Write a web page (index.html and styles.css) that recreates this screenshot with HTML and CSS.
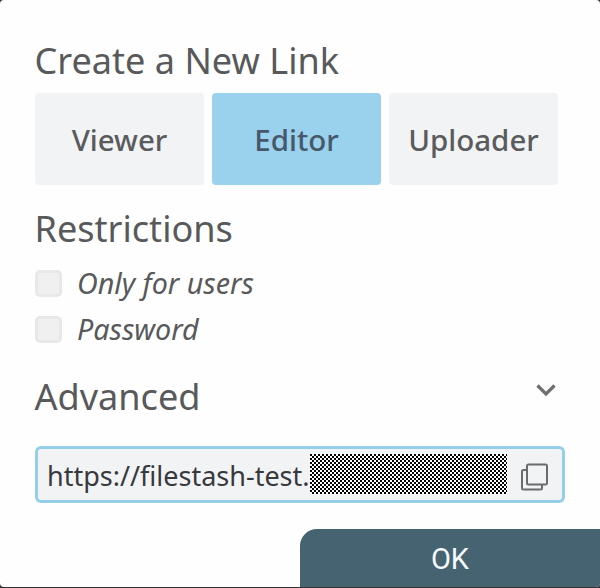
FILE: index.html
```html
<!DOCTYPE html>
<html lang="en">
<head>
<meta charset="utf-8">
<title>Create a New Link</title>
<link rel="stylesheet" href="styles.css">
</head>
<body>
<main class="modal">
  <div class="content">
    <h2 class="heading">Create a New Link</h2>
    <div class="roles">
      <button class="role">Viewer</button>
      <button class="role active">Editor</button>
      <button class="role">Uploader</button>
    </div>
    <h2 class="heading restrictions">Restrictions</h2>
    <label class="option"><span class="box"></span><span class="label">Only for users</span></label>
    <label class="option"><span class="box"></span><span class="label">Password</span></label>
    <div class="advanced">
      <h2 class="heading">Advanced</h2>
      <svg class="chevron" width="24" height="16" viewBox="0 0 24 16"><path d="M3.500 3.500 12 12l8.500-8.500" fill="none" stroke="#6f6f6f" stroke-width="3.200"/></svg>
    </div>
    <div class="link">
      <span class="url">https://filestash-test.</span>
      <span class="redacted"></span>
      <svg class="copy" width="28" height="28" viewBox="0 0 28 28" fill="none" stroke="#6b6b6d" stroke-width="2"><rect x="7" y="1.500" width="20" height="20" rx="1.500"/><path d="M7 7H3.500Q2 7 2 8.500V25q0 1.500 1.500 1.500H20.500q1.500 0 1.500-1.500V21.500"/></svg>
    </div>
  </div>
  <button class="ok">OK</button>
</main>
</body>
</html>
```
FILE: styles.css
```css
* { box-sizing: border-box; }
body { margin: 0; background: #333; font-family: "Noto Sans", sans-serif; color: #58595a; }
button { border: 0; padding: 0; font-family: inherit; color: inherit; }
.modal { width: 600px; height: 587px; background: #fefefe; border-radius: 4px; display: flex; flex-direction: column; justify-content: space-between; overflow: hidden; }
.content { padding: 35px 35px 0 35px; }
.heading { margin: 0 0 0 -0.500px; font-size: 36.100px; line-height: 50px; font-weight: 400; white-space: nowrap; }
.roles { display: flex; gap: 8px; margin-top: 8px; }
.role { width: 169px; height: 92px; border-radius: 4px; background: #f2f3f5; font-size: 29.500px; font-weight: 500; color: #5a5b5d; }
.role.active { background: #9ad1ec; color: #46586a; }
.restrictions { margin-top: 18px; margin-bottom: 7px; }
.option { display: flex; align-items: center; height: 46px; gap: 15px; }
.box { width: 27px; height: 27px; border: 3px solid #e8e8e8; border-radius: 5px; background: #f0f0f0; }
.label { font-size: 28.700px; font-style: italic; white-space: nowrap; margin-top: -2px; }
.advanced { display: flex; justify-content: space-between; margin-top: 19px; padding-right: 7px; }
.chevron { margin-top: 11px; }
.link { display: flex; align-items: center; width: 530px; height: 57px; margin-top: 25px; border: 3px solid #94cee8; border-radius: 6px; background: #f2f3f5; padding-left: 9px; color: #38393d; }
.url { width: 263px; font-size: 27px; white-space: nowrap; padding-top: 1px; }
.redacted { width: 197px; height: 40px; margin-top: -1px; background: conic-gradient(#fff 25%, #000 0 50%, #fff 0 75%, #000 0) 0 0 / 4px 4px; }
.copy { margin: 5px 0 0 13px; }
.ok { align-self: flex-end; width: 300px; height: 58px; border-radius: 17px 0 0 0; background: #466372; color: #f5fafe; font: 400 29px/60px Roboto, sans-serif; }
```
